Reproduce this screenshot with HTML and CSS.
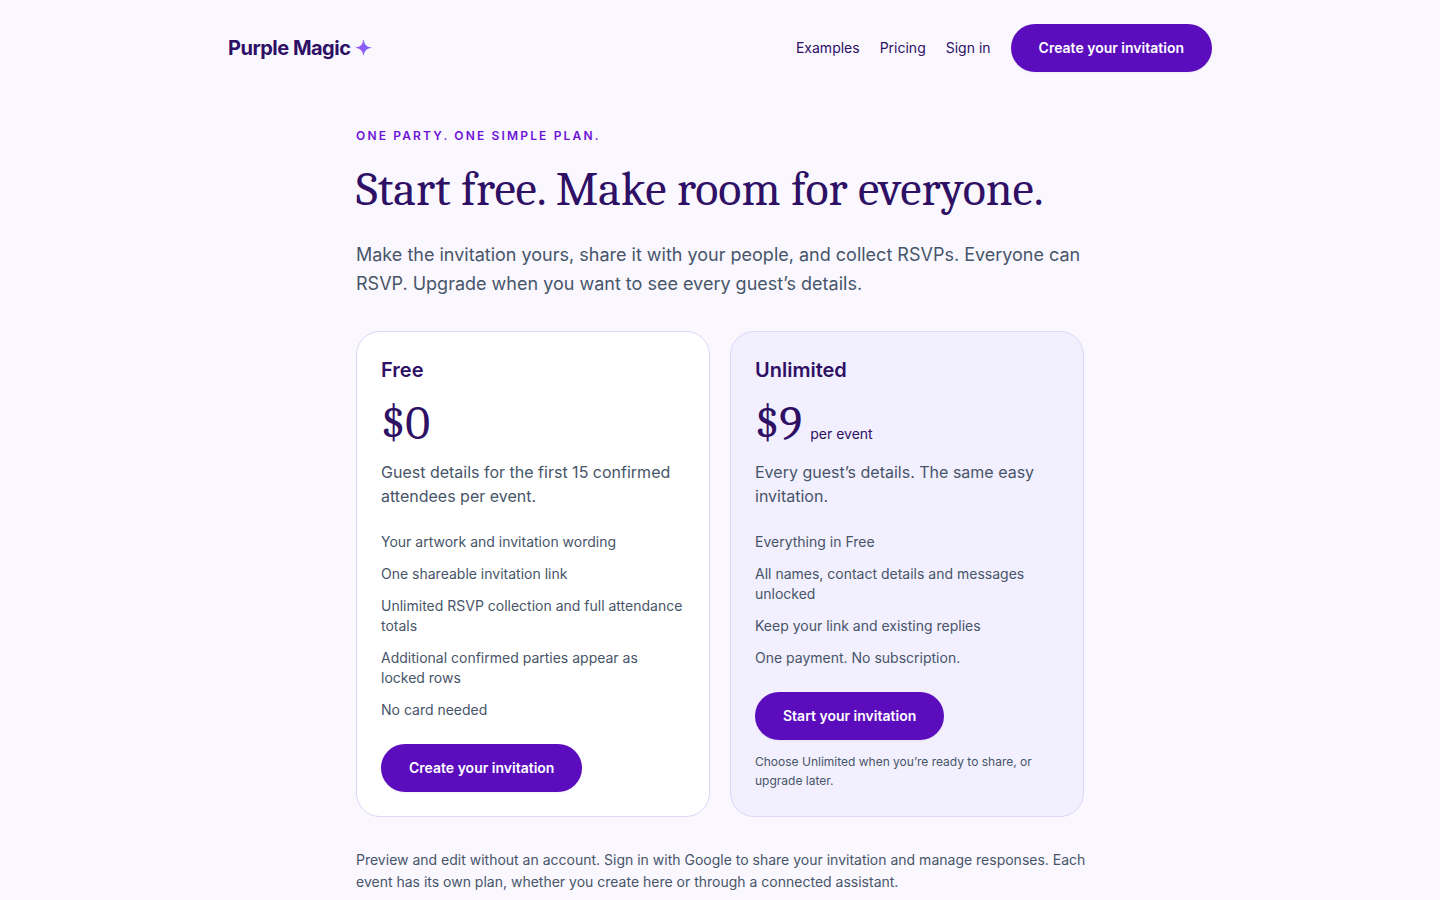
FILE: index.html
```html
<!DOCTYPE html>
<html lang="en">
<head>
<meta charset="utf-8">
<meta name="viewport" content="width=device-width, initial-scale=1">
<title>Pricing – Purple Magic</title>
<link rel="stylesheet" href="styles.css">
</head>
<body>
<header class="site-header">
  <a class="brand" href="#">Purple Magic <span class="brand-star" aria-hidden="true">✦</span></a>
  <nav class="site-nav">
    <a class="nav-link" href="#">Examples</a>
    <a class="nav-link" href="#">Pricing</a>
    <a class="nav-link" href="#">Sign in</a>
    <a class="button" href="#">Create your invitation</a>
  </nav>
</header>
<main class="pricing">
  <p class="eyebrow">One party. One simple plan.</p>
  <h1 class="title">Start free. Make room for everyone.</h1>
  <p class="lead">Make the invitation yours, share it with your people, and collect RSVPs. Everyone can RSVP. Upgrade when you want to see every guest’s details.</p>
  <div class="plans">
    <section class="plan">
      <h2 class="plan-name">Free</h2>
      <p class="price">$0</p>
      <p class="plan-summary">Guest details for the first 15 confirmed attendees per event.</p>
      <ul class="features">
        <li>Your artwork and invitation wording</li>
        <li>One shareable invitation link</li>
        <li>Unlimited RSVP collection and full attendance totals</li>
        <li>Additional confirmed parties appear as locked rows</li>
        <li>No card needed</li>
      </ul>
      <a class="button" href="#">Create your invitation</a>
    </section>
    <section class="plan plan-featured">
      <h2 class="plan-name">Unlimited</h2>
      <p class="price">$9<span class="price-unit">per event</span></p>
      <p class="plan-summary">Every guest’s details. The same easy invitation.</p>
      <ul class="features">
        <li>Everything in Free</li>
        <li>All names, contact details and messages unlocked</li>
        <li>Keep your link and existing replies</li>
        <li>One payment. No subscription.</li>
      </ul>
      <a class="button" href="#">Start your invitation</a>
      <p class="plan-note">Choose Unlimited when you’re ready to share, or upgrade later.</p>
    </section>
  </div>
  <p class="footnote">Preview and edit without an account. Sign in with Google to share your invitation and manage responses. Each event has its own plan, whether you create here or through a connected assistant.</p>
</main>
</body>
</html>
```
FILE: styles.css
```css
:root {
  --ink: #2e1065;
  --muted: #475569;
  --accent: #5b0dbe;
  --serif: Cambria, Georgia, serif;
}

* {
  box-sizing: border-box;
}

body {
  margin: 0;
  background: #faf7ff;
  color: var(--ink);
  font-family: Inter, sans-serif;
  font-size: 16px;
  line-height: 24px;
}

h1, h2, p, ul {
  margin: 0;
  padding: 0;
}

a {
  color: inherit;
  text-decoration: none;
}

.site-header {
  display: flex;
  align-items: center;
  justify-content: space-between;
  max-width: 1024px;
  margin: 0 auto;
  padding: 24px 20px;
}

.brand {
  font-size: 20px;
  font-weight: 700;
  line-height: 28px;
  letter-spacing: -0.025em;
}

.brand-star {
  color: #8b5cf6;
}

.site-nav {
  display: flex;
  align-items: center;
  gap: 20px;
}

.nav-link {
  font-size: 14px;
  line-height: 20px;
}

.button {
  display: inline-flex;
  align-items: center;
  min-height: 48px;
  padding: 0 28px;
  border-radius: 24px;
  background: var(--accent);
  box-shadow: 0 1px 2px rgb(0 0 0 / 5%);
  color: #fff;
  font-size: 14px;
  font-weight: 600;
  line-height: 20px;
}

.pricing {
  max-width: 768px;
  margin: 0 auto;
  padding: 32px 20px 64px;
}

.eyebrow {
  color: #6d13d6;
  font-size: 12px;
  font-weight: 600;
  line-height: 16px;
  letter-spacing: 0.18em;
  text-transform: uppercase;
}

.title {
  margin-top: 20px;
  font-family: var(--serif);
  font-size: 48px;
  font-weight: 400;
  line-height: 52px;
}

.lead {
  margin-top: 24px;
  color: var(--muted);
  font-size: 18px;
  line-height: 29px;
}

.plans {
  display: grid;
  grid-template-columns: repeat(auto-fit, minmax(300px, 1fr));
  gap: 20px;
  margin-top: 33px;
}

.plan {
  padding: 24px;
  border: 1px solid #ddd6f7;
  border-radius: 24px;
  background: #fff;
}

.plan-featured {
  background: #f2effe;
}

.plan-name {
  font-size: 20px;
  font-weight: 600;
  line-height: 28px;
}

.price {
  margin-top: 16px;
  font-family: var(--serif);
  font-size: 48px;
  line-height: 48px;
}

.price-unit {
  margin-left: 8px;
  font-family: Inter, sans-serif;
  font-size: 14px;
  line-height: 20px;
}

.plan-summary {
  margin-top: 12px;
  color: var(--muted);
}

.features {
  display: grid;
  gap: 12px;
  margin: 24px 0;
  color: var(--muted);
  font-size: 14px;
  line-height: 20px;
  list-style: none;
}

.plan-note {
  margin-top: 12px;
  color: var(--muted);
  font-size: 12px;
  line-height: 19px;
}

.footnote {
  margin: 32px -8px 0 0;
  color: var(--muted);
  font-size: 14px;
  line-height: 22px;
}
```
